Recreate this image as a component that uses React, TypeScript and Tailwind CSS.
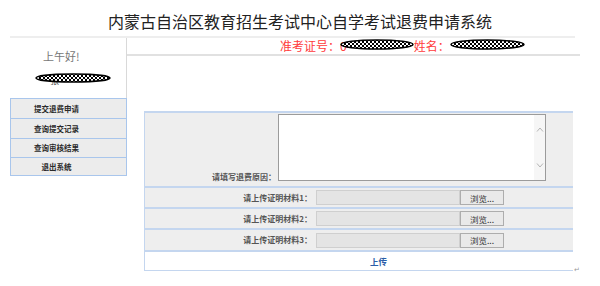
import React, { useId } from 'react';

// redaction blob: checkered oval drawn over personal data
function Scribble({ w, h }: { w: number; h: number }) {
    const id = useId().replace(/:/g, '');
    return (
        <svg width={w} height={h} className="block shrink-0">
            <defs>
                <pattern id={id} width="4" height="4" patternUnits="userSpaceOnUse">
                    <rect width="4" height="4" fill="#fff" />
                    <rect width="2" height="2" fill="#000" />
                    <rect x="2" y="2" width="2" height="2" fill="#000" />
                </pattern>
            </defs>
            <ellipse
                cx={w / 2}
                cy={h / 2}
                rx={w / 2 - 1}
                ry={h / 2 - 1}
                fill={`url(#${id})`}
                stroke="#000"
                strokeWidth="1.5"
            />
        </svg>
    );
}

const menu = [
    { label: '提交退费申请', h: 'h-[20px]' },
    { label: '查询提交记录', h: 'h-[20px]' },
    { label: '查询审核结果', h: 'h-[19px]' },
    { label: '退出系统', h: 'h-[19px]' },
];

const files = [
    { n: 1, h: 'h-[21px]' },
    { n: 2, h: 'h-[21px]' },
    { n: 3, h: 'h-[22px]' },
];

export default function App() {
    return (
        <div className="w-[600px] h-[286px] bg-white text-[#333] font-['Noto_Sans_CJK_SC',sans-serif]">
            {/* Title */}
            <div className="h-[36px] flex items-center justify-center pt-[6px] text-[16px] leading-[20px] text-[#222]">
                内蒙古自治区教育招生考试中心自学考试退费申请系统
            </div>
            <div className="ml-[10px] w-[565px] h-[2px] bg-[#eeeeee]" />

            <div className="flex ml-[10px] w-[565px]">
                {/* Sidebar */}
                <aside className="w-[117px] shrink-0">
                    <div className="h-[60px] border-r border-[#d9d9d9] pt-[11px]">
                        <div className="pl-[33px] text-[11px] leading-[14px] text-[#777]">上午好!</div>
                        <div className="relative mt-[10px] h-[14px]">
                            <div className="pl-[40px] pt-[2px] text-[9px] leading-[12px] text-[#555]">张**</div>
                            <div className="absolute top-0 left-[25px]">
                                <Scribble w={76} h={10} />
                            </div>
                        </div>
                    </div>
                    <ul>
                        {menu.map((m, i) => (
                            <li
                                key={m.label}
                                className={`${m.h} flex items-center justify-center pr-[24px] bg-[#ececec] border-x border-t border-[#a9c6ec] text-[7.5px] font-bold text-[#2a2a2a] ${i === menu.length - 1 ? 'border-b' : ''}`}
                            >
                                {m.label}
                            </li>
                        ))}
                    </ul>
                </aside>

                {/* Main */}
                <main className="flex-1">
                    <div className="h-[16px] flex items-start pl-[153px] pt-[1px] text-[12px] leading-[13px] text-[#ff3b3b]">
                        <span>准考证号：0</span>
                        <span className="-ml-[7px]">
                            <Scribble w={74} h={11} />
                        </span>
                        <span>姓名：</span>
                        <span>
                            <Scribble w={75} h={11} />
                        </span>
                    </div>
                    <div className="h-[2px] bg-[#e1e1e1]" />

                    <div className="flex items-end mt-[55px] ml-[17px]">
                        <div className="w-[429px] border-l border-[#c4d6ef] bg-[#eeeeee]">
                            {/* reason */}
                            <div className="h-[75px] flex border-t-2 border-[#c4d6ef]">
                                <div className="w-[131px] flex items-end justify-end pb-[4px] text-[8px] leading-[10px] font-bold text-[#555]">
                                    请填写退费原因：
                                </div>
                                <div className="ml-[2px] mt-[1px] w-[268px] h-[67px] flex border border-[#9b9b9b] bg-white">
                                    <div className="flex-1" />
                                    <div className="w-[11px] bg-[#f6f6f6] flex flex-col items-center justify-between py-[12px]">
                                        <svg width="8" height="5" viewBox="0 0 8 5">
                                            <path d="M1 4.5 L4 1 L7 4.5" fill="none" stroke="#b5b5b5" strokeWidth="1" />
                                        </svg>
                                        <svg width="8" height="5" viewBox="0 0 8 5">
                                            <path d="M1 0.5 L4 4 L7 0.5" fill="none" stroke="#b5b5b5" strokeWidth="1" />
                                        </svg>
                                    </div>
                                </div>
                            </div>

                            {/* uploads */}
                            {files.map((f) => (
                                <div key={f.n} className={`${f.h} flex items-center border-t-2 border-[#c4d6ef]`}>
                                    <div className="w-[171px] text-right pr-[4px] text-[8px] leading-[10px] font-bold text-[#555]">
                                        请上传证明材料{f.n}：
                                    </div>
                                    <div className="w-[144px] h-[15px] bg-[#e4e4e4] border border-[#cfcfcf]" />
                                    <button className="w-[44px] h-[15px] bg-[#e9e9e9] border border-[#adadad] text-[8.5px] leading-[12px] text-[#333]">
                                        浏览...
                                    </button>
                                </div>
                            ))}

                            <div className="h-[21px] flex items-center bg-white border-t-2 border-b border-[#c4d6ef] pl-[225px] text-[8.5px] font-bold text-[#2b5ea8]">
                                上传
                            </div>
                        </div>
                        <span className="ml-[1px] mb-[-2px] text-[7px] leading-[8px] text-[#999]">↵</span>
                    </div>
                </main>
            </div>
        </div>
    );
}
